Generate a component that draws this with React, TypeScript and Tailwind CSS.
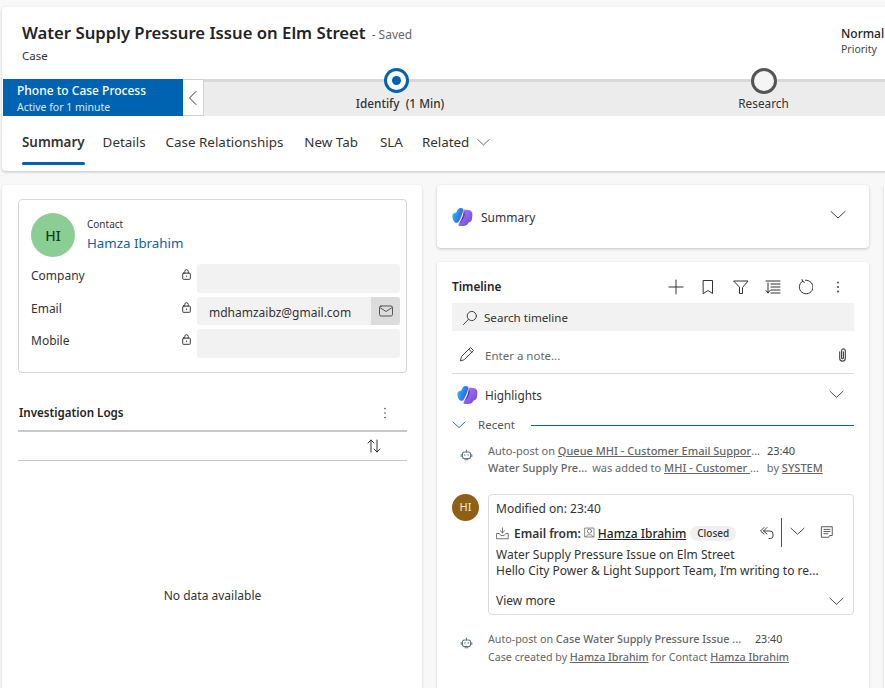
import { ReactNode } from "react";

const FONT = "font-['Noto_Sans','Open_Sans',sans-serif]";

function Svg({ size = 16, className = "", children }: { size?: number; className?: string; children: ReactNode }) {
  return (
    <svg
      width={size}
      height={size}
      viewBox="0 0 16 16"
      fill="none"
      stroke="currentColor"
      strokeWidth="1"
      strokeLinecap="round"
      strokeLinejoin="round"
      className={`shrink-0 ${className}`}
    >
      {children}
    </svg>
  );
}

function Chevron({ size = 16, className = "" }: { size?: number; className?: string }) {
  return (
    <Svg size={size} className={className}>
      <path d="M1 4.5 L8 11 L15 4.5" />
    </Svg>
  );
}

function Lock() {
  return (
    <Svg size={11} className="text-[#333]">
      <rect x="2.5" y="6" width="11" height="9" rx="1" strokeWidth="1.4" />
      <path d="M5.5 6 V3.5 a2.5 2.5 0 0 1 5 0 V6" strokeWidth="1.4" />
      <circle cx="8" cy="10.5" r="0.9" fill="currentColor" stroke="none" />
    </Svg>
  );
}

function Copilot({ id }: { id: string }) {
  return (
    <svg width="21" height="20" viewBox="0 0 21 20" className="shrink-0">
      <defs>
        <linearGradient id={`${id}a`} x1="0" y1="0.3" x2="1" y2="0.8">
          <stop offset="0" stopColor="#22c3f5" />
          <stop offset="0.55" stopColor="#2f7bf0" />
          <stop offset="1" stopColor="#4a56e6" />
        </linearGradient>
        <linearGradient id={`${id}b`} x1="0" y1="0" x2="1" y2="1">
          <stop offset="0" stopColor="#b07cf2" />
          <stop offset="1" stopColor="#6a48d8" />
        </linearGradient>
      </defs>
      <path d="M9 1 C6.8 1 5.8 2.2 5 4 L4.3 5.5 L2.5 6 C1 6.5 0.4 7.6 0.4 9 C0.4 11.5 1 13 2 14.5 C3 16 4.5 16 6.2 15.5 C8.5 12 10.5 7 11.3 3.5 C11.6 2 10.6 1 9 1Z" fill={`url(#${id}a)`} />
      <path d="M12 2.5 L16.5 3 C19 3.4 20.6 5 20.4 7.5 L20 12 C19.7 14 18.6 15 17 15.3 L15.8 16.8 C14.8 18.4 13.4 19 11.5 19 L8 19 C6.3 19 6 18 7 17 C9.5 14.3 11.3 10.5 12.3 6.5 C12.6 5 12.6 3.6 12 2.5Z" fill={`url(#${id}b)`} />
      <path d="M11.6 3 C11.9 6.5 10 12.5 6.4 17.4 C9.4 15.4 11.6 11.5 12.6 8 C13.2 6 12.9 4 11.6 3Z" fill="#6a2cc0" />
    </svg>
  );
}

function Bot() {
  return (
    <Svg size={13} className="text-[#64777f]">
      <rect x="3" y="5" width="10" height="8" rx="2.5" strokeWidth="1.3" />
      <path d="M8 5 V2.5 M1.5 8 V10.5 M14.5 8 V10.5 M6 14.5 H10" strokeWidth="1.3" />
      <circle cx="6" cy="8.5" r="0.9" fill="currentColor" stroke="none" />
      <circle cx="10" cy="8.5" r="0.9" fill="currentColor" stroke="none" />
    </Svg>
  );
}

function Field({ label, value, mail, h }: { label: string; value?: string; mail?: boolean; h: string }) {
  return (
    <div className="flex items-start">
      <div className="w-[150px] text-[12px] leading-[24px] text-[#333]">{label}</div>
      <div className="h-[20px] w-[16px] flex items-center"><Lock /></div>
      <div className={`w-[203px] ${h} bg-[#f2f2f2] rounded-[3px] flex items-center overflow-hidden`}>
        {value && <span className="pl-[12px] pt-[3px] flex-1 text-[12px] text-[#333]">{value}</span>}
        {mail && (
          <div className="w-[29px] h-full bg-[#dcdcdc] flex items-center justify-center">
            <Svg size={16} className="text-[#555]">
              <rect x="1.5" y="3" width="13" height="10" rx="1.5" />
              <path d="M1.8 4.5 L8 8.5 L14.2 4.5" />
            </Svg>
          </div>
        )}
      </div>
    </div>
  );
}

function Tab({ label, active, className = "" }: { label: string; active?: boolean; className?: string }) {
  return (
    <div className={`relative h-[55px] flex items-center pb-[3px] ${active ? "-mr-[2px]" : ""} ${className}`}>
      <span className={`text-[13.4px] text-[#333] ${active ? "font-semibold" : ""}`}>{label}</span>
      {active && <div className="absolute left-0 right-0 top-[46px] h-[3px] rounded-[2px] bg-[#0063b1]" />}
    </div>
  );
}

function U({ children }: { children: ReactNode }) {
  return <span className="underline font-medium">{children}</span>;
}

export default function App() {
  return (
    <div className={`${FONT} w-[885px] h-[688px] overflow-hidden bg-[#f8f8f8] pt-[7px] pl-[2px]`}>
      {/* header */}
      <div className="w-[900px] h-[164px] bg-white rounded-[4px] shadow-[0_1px_3px_rgba(0,0,0,0.22)]">
        <div className="h-[72px] flex pl-[20px] pr-[17px] relative">
          <div className="pt-[14px]">
            <div className="flex items-baseline">
              <span className="text-[16.7px] leading-[24px] font-semibold text-[#242424]">Water Supply Pressure Issue on Elm Street</span>
              <span className="ml-[6px] text-[12px] text-[#666]">- Saved</span>
            </div>
            <div className="text-[11.5px] leading-[16px] mt-[3px] text-[#333]">Case</div>
          </div>
          <div className="absolute left-[839px] top-[19px] w-[60px]">
            <div className="text-[12px] leading-[16px] font-medium text-[#242424]">Normal</div>
            <div className="text-[10.5px] leading-[15px] text-[#444]">Priority</div>
          </div>
        </div>
        {/* process bar */}
        <div className="h-[37px] flex pl-[1px]">
          <div className="w-[180px] shrink-0 h-full bg-[#0063b1] pl-[14px] pt-[3px] text-white whitespace-nowrap">
            <div className="text-[12px] leading-[17px] font-medium">Phone to Case Process</div>
            <div className="text-[10.5px] leading-[14px] text-[#d8e6f3] mt-[1px]">Active for 1 minute</div>
          </div>
          <div className="w-[21px] shrink-0 h-full bg-white border border-[#d0d0d0] border-l-0 flex items-center justify-center">
            <Svg size={16} className="text-[#333]"><path d="M11 1.5 L4.5 8 L11 14.5" /></Svg>
          </div>
          <div className="flex-1 h-full bg-[#ececec] border-t-[3px] border-[#d8d8d8] flex pl-[9px]">
            <div className="relative w-[367px] flex flex-col items-center">
              <div className="absolute -top-[14px] w-[25px] h-[25px] rounded-full border-[3px] border-[#0063b1] bg-white flex items-center justify-center">
                <div className="w-[9px] h-[9px] rounded-full bg-[#0063b1]" />
              </div>
              <div className="pt-[13px] pl-[7px] text-[11.8px] leading-[16px] font-medium text-[#333] whitespace-pre">Identify  (1 Min)</div>
            </div>
            <div className="relative w-[367px] flex flex-col items-center">
              <div className="absolute -top-[14px] w-[26px] h-[26px] rounded-full border-[3px] border-[#555] bg-[#f5f5f5]" />
              <div className="pt-[13px] text-[11.8px] leading-[16px] text-[#333]">Research</div>
            </div>
          </div>
        </div>
        {/* tabs */}
        <div className="flex items-start pl-[20px] gap-[20px]">
          <Tab label="Summary" active />
          <Tab label="Details" />
          <Tab label="Case Relationships" />
          <Tab label="New Tab" className="ml-[1px]" />
          <Tab label="SLA" className="ml-[2px]" />
          <div className="flex items-center h-[55px] pb-[3px] gap-[8px] -ml-[1px]">
            <span className="text-[13.4px] text-[#333]">Related</span>
            <Chevron size={13} className="text-[#444]" />
          </div>
        </div>
      </div>

      <div className="flex mt-[14px] items-start">
        {/* left column */}
        <div className="w-[420px] shrink-0 h-[520px] bg-white rounded-[4px] shadow-[0_1px_3px_rgba(0,0,0,0.15)] px-[16px] pt-[14px]">
          <div className="h-[174px] w-[389px] border border-[#d6d6d6] rounded-[4px] pl-[12px] pr-[6px] pt-[13px]">
            <div className="flex">
              <div className="w-[44px] h-[44px] rounded-full bg-[#8bce94] flex items-center justify-center text-[14px] font-medium text-[#0e3d18]">HI</div>
              <div className="ml-[12px]">
                <div className="text-[10px] leading-[14px] mt-[4px] text-[#333]">Contact</div>
                <div className="text-[13.3px] leading-[20px] mt-[2px] text-[#115ea3]">Hamza Ibrahim</div>
              </div>
            </div>
            <div className="mt-[7px] flex flex-col gap-[4px]">
              <Field label="Company" h="h-[29px]" />
              <Field label="Email" value="mdhamzaibz@gmail.com" mail h="h-[28px]" />
              <Field label="Mobile" h="h-[29px]" />
            </div>
          </div>
          <div className="mt-[28px] w-[389px] flex items-center justify-between pl-[1px] pr-[14px] h-[29px] pb-[6px]">
            <span className="text-[11.6px] font-semibold text-[#242424]">Investigation Logs</span>
            <Svg size={16} className="text-[#444]">
              <circle cx="8" cy="3.5" r="0.8" fill="currentColor" stroke="none" />
              <circle cx="8" cy="8" r="0.8" fill="currentColor" stroke="none" />
              <circle cx="8" cy="12.5" r="0.8" fill="currentColor" stroke="none" />
            </Svg>
          </div>
          <div className="w-[389px] h-[31px] border-t-2 border-b border-[#c8c8c8] flex items-center justify-end pr-[25px]">
            <Svg size={16} className="text-[#333]">
              <path d="M5 14 V2 M2 5 L5 2 L8 5 M11 2 V14 M8 11 L11 14 L14 11" />
            </Svg>
          </div>
          <div className="w-[389px] h-[180px] pt-[126px] text-center text-[12px] text-[#333]">No data available</div>
        </div>

        {/* middle column */}
        <div className="ml-[15px] w-[432px] shrink-0 flex flex-col gap-[14px]">
          <div className="h-[63px] bg-white rounded-[4px] shadow-[0_1px_3px_rgba(0,0,0,0.22)] flex items-start pl-[15px] pr-[23px] pt-[22px]">
            <Copilot id="s" />
            <span className="ml-[8px] pt-[1px] text-[12px] leading-[20px] text-[#333] flex-1">Summary</span>
            <Chevron size={16} className="text-[#444]" />
          </div>
          <div className="h-[440px] bg-white rounded-[4px] shadow-[0_1px_3px_rgba(0,0,0,0.15)] px-[15px] pt-[14px]">
            <div className="h-[27px] flex items-center pr-[8px]">
              <span className="text-[11.8px] font-semibold text-[#242424] flex-1 -mt-[5px]">Timeline</span>
              <div className="flex items-center gap-[16.5px] text-[#333] -mt-[5px]">
                <Svg><path d="M8 1 V15 M1 8 H15" /></Svg>
                <Svg><path d="M3.5 1.5 H12.5 V14.5 L8 11.5 L3.5 14.5 Z" /></Svg>
                <Svg><path d="M1 2 H15 L9.5 8.5 V14.5 H6.5 V8.5 Z" /></Svg>
                <Svg><path d="M1 2 H15 M6 5 H15 M6 8 H15 M6 11 H15 M6 14 H15 M3 4 V14 M1 11.5 L3 14 L5 11.5" /></Svg>
                <Svg className="-ml-[1px]"><path d="M5.5 2.2 A6.8 6.8 0 1 0 8.5 1.2 M5.5 2.2 L5 0.6 M5.5 2.2 L7.3 3.2" /></Svg>
                <Svg className="ml-[1px]">
                  <circle cx="8" cy="3.5" r="0.9" fill="currentColor" stroke="none" />
                  <circle cx="8" cy="8" r="0.9" fill="currentColor" stroke="none" />
                  <circle cx="8" cy="12.5" r="0.9" fill="currentColor" stroke="none" />
                </Svg>
              </div>
            </div>
            <div className="h-[28px] bg-[#f2f2f2] flex items-center pl-[10px] pt-[1px]">
              <Svg size={16} className="text-[#444]">
                <circle cx="9.8" cy="6" r="4.6" />
                <path d="M6.5 9.3 L1.5 14.5" />
              </Svg>
              <span className="ml-[6px] text-[11.6px] text-[#333]">Search timeline</span>
            </div>
            <div className="h-[43px] border-b border-[#dcdcdc] flex items-center pl-[7px] pr-[4px] pt-[7px]">
              <Svg size={16} className="text-[#444] -mt-[3px]">
                <path d="M1.5 14.5 L2.5 10.5 L11.5 1.5 L14.5 4.5 L5.5 13.5 Z M9.8 3.2 L12.8 6.2" />
              </Svg>
              <span className="ml-[10px] flex-1 text-[11.5px] text-[#666]">Enter a note...</span>
              <Svg size={15} className="text-[#444] -mt-[3px]">
                <path d="M5 5 V12 a3 3 0 0 0 6 0 V4 a2 2 0 0 0 -4 0 V11.5 a1 1 0 0 0 2 0 V5" strokeWidth="1.2" />
              </Svg>
            </div>
            <div className="h-[42px] flex items-start pt-[11px] pl-[5px] pr-[10px]">
              <Copilot id="h" />
              <span className="ml-[7px] flex-1 text-[11.8px] leading-[21px] text-[#333]">Highlights</span>
              <Chevron size={15} className="mt-[2px] text-[#444]" />
            </div>
            <div className="h-[18px] flex items-center">
              <Chevron size={14} className="text-[#0063b1]" />
              <span className="ml-[12px] text-[11.5px] text-[#555]">Recent</span>
              <div className="ml-[16px] flex-1 h-px bg-[#0063b1]" />
            </div>
            {/* auto-post 1 */}
            <div className="mt-[8px] flex h-[38px] text-[11px] leading-[17px] text-[#666] whitespace-nowrap">
              <div className="w-[36px] pl-[8px] pt-[6px]"><Bot /></div>
              <div>
                <div>Auto-post on <U>Queue MHI - Customer Email Suppor</U>... <span className="ml-[4px] text-[#444]">23:40</span></div>
                <div><span className="font-medium">Water Supply Pre...</span><span className="ml-[5px]">was added to </span><U>MHI - Customer </U>...<span className="ml-[8px]">by </span><U>SYSTEM</U></div>
              </div>
            </div>
            {/* email */}
            <div className="mt-[14px] flex items-start">
              <div className="w-[27px] h-[27px] rounded-full bg-[#8f5f16] text-[#f5ead6] flex items-center justify-center text-[11px] shrink-0">HI</div>
              <div className="ml-[9px] w-[366px] h-[121px] border border-[#dcdcdc] rounded-[4px] pl-[7px] pr-[9px] pt-[4px] text-[12px] text-[#333]">
                <div className="leading-[20px]">Modified on: 23:40</div>
                <div className="h-[27px] pt-[2px] flex items-center">
                  <Svg size={13} className="text-[#555]"><path d="M1 8 H4 L6 10.5 H10 L12 8 H15 V14.5 H1 Z M8 1 V7 M5.5 4.8 L8 7.2 L10.5 4.8" /></Svg>
                  <span className="ml-[5px] font-semibold">Email from:</span>
                  <Svg size={11} className="ml-[3px] -mt-[3px] text-[#555]"><rect x="1.5" y="1.5" width="13" height="13" /><circle cx="8" cy="6" r="3" /><path d="M3 14 C4 10 12 10 13 14" /></Svg>
                  <span className="ml-[3px] font-medium underline text-[#242424]">Hamza Ibrahim</span>
                  <span className="ml-[4px] h-[15px] px-[7px] rounded-full bg-[#f0f0f0] text-[10px] leading-[15px] font-medium">Closed</span>
                  <div className="ml-[23px] flex items-center text-[#444] -mt-[2px]">
                    <Svg size={16}><path d="M5 2.5 L1.5 6 L5 9 M8 2.5 L4.5 6 L8 9 M4.5 6 H11 a3 3 0 0 1 3 3 V11 a2.5 2.5 0 0 1 -2.5 2.5 H10" /></Svg>
                    <div className="ml-[6px] w-px h-[29px] bg-[#555]" />
                    <Chevron size={15} className="ml-[8px] -mt-[3px]" />
                    <Svg size={14} className="ml-[15px] -mt-[1px]"><path d="M2 2 H14 V12 H11 L10 14 H2 Z M4.5 5 H11.5 M4.5 7.5 H11.5 M4.5 10 H9" /></Svg>
                  </div>
                </div>
                <div className="mt-[1px] leading-[16px] whitespace-nowrap">Water Supply Pressure Issue on Elm Street</div>
                <div className="leading-[16px] whitespace-nowrap">Hello City Power &amp; Light Support Team, I’m writing to re...</div>
                <div className="mt-[13px] flex items-center justify-between">
                  <span className="leading-[18px]">View more</span>
                  <Chevron size={15} className="text-[#444]" />
                </div>
              </div>
            </div>
            {/* auto-post 2 */}
            <div className="mt-[15px] flex text-[10.7px] leading-[18px] text-[#666] whitespace-nowrap">
              <div className="w-[36px] pl-[8px] pt-[6px]"><Bot /></div>
              <div>
                <div>Auto-post on <span className="font-medium text-[10.8px]">Case Water Supply Pressure Issue ...</span> <span className="ml-[11px] text-[#444]">23:40</span></div>
                <div>Case created by <U>Hamza Ibrahim</U> for Contact <U>Hamza Ibrahim</U></div>
              </div>
            </div>
          </div>
        </div>

        {/* sliver of the next column */}
        <div className="ml-[15px] w-[20px] shrink-0 h-[520px] bg-white shadow-[0_1px_3px_rgba(0,0,0,0.15)]" />
      </div>
    </div>
  );
}
